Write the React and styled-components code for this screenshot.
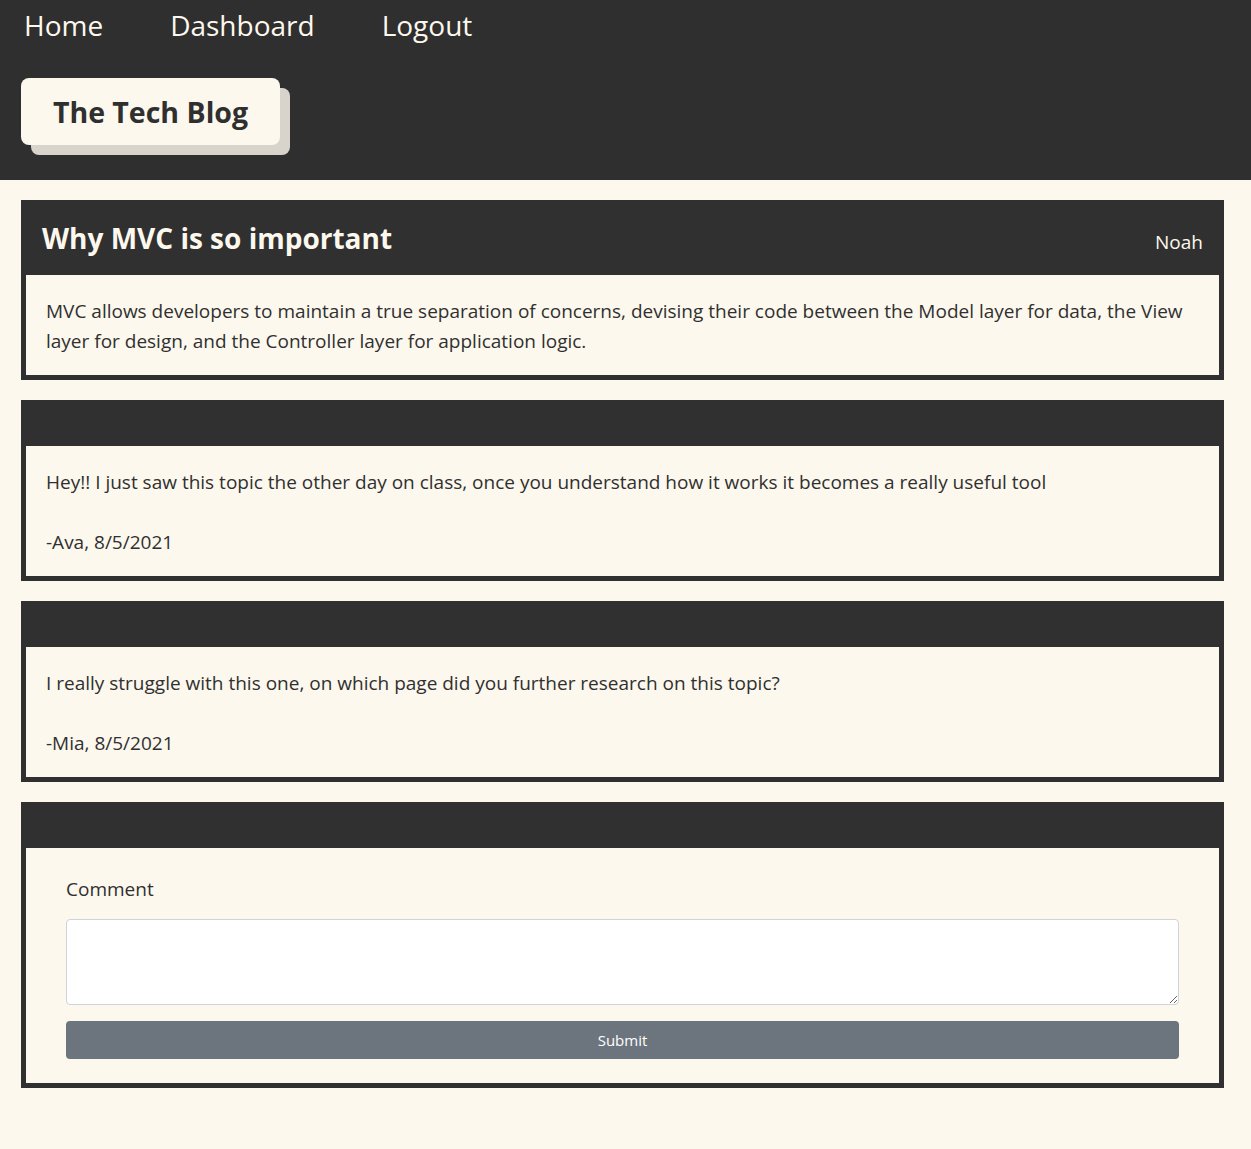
import React from "react";
import styled, { createGlobalStyle } from "styled-components";

const GlobalStyle = createGlobalStyle`
  body {
    margin: 0;
    padding: 0;
    background-color: #fdf8ee;
    font-family: 'Open Sans', 'Noto Sans', sans-serif;
    color: #303030;
  }
  * {
    box-sizing: border-box;
  }
`;

const Header = styled.header`
  background-color: #2f2f2f;
  height: 180px;
  padding: 5px 24px 0 21px;
`;

const Nav = styled.nav`
  display: flex;
  gap: 67px;
  padding-left: 3px;
`;

const NavLink = styled.a`
  color: #fdf8ee;
  font-size: 28px;
  line-height: 40px;
  text-decoration: none;
`;

const TitleWrap = styled.div`
  position: relative;
  display: inline-block;
  margin-top: 33px;
`;

const TitleShadow = styled.div`
  position: absolute;
  left: 10px;
  top: 10px;
  width: 100%;
  height: 100%;
  background-color: #d9d4cb;
  border-radius: 8px;
`;

const TitleBox = styled.h1`
  position: relative;
  margin: 0;
  width: 259px;
  height: 67px;
  display: flex;
  align-items: center;
  justify-content: center;
  background-color: #fdf8ee;
  border-radius: 8px;
  font-size: 28.5px;
  font-weight: 700;
  color: #2f2f2f;
`;

const Main = styled.main`
  display: flex;
  flex-direction: column;
  gap: 20px;
  padding: 20px 27px 40px 21px;
`;

const Card = styled.section`
  border: 5px solid #303030;
  background-color: #fdf8ee;
`;

const CardHeader = styled.div`
  background-color: #303030;
  color: #fdf8ee;
  display: flex;
  justify-content: space-between;
  align-items: center;
  height: ${(p) => (p.$tall ? "75px" : "46px")};
  margin: -5px -5px 0;
  padding: 0 21px;
`;

const PostTitle = styled.h2`
  margin: 0;
  font-size: 28px;
  font-weight: 700;
`;

const Author = styled.span`
  font-size: 19px;
  padding-top: 8px;
`;

const CardBody = styled.div`
  padding: 21px 20px 19px;
  font-size: 19px;
  line-height: 30px;
`;

const Para = styled.p`
  margin: 0;
`;

const Signature = styled.p`
  margin: 30px 0 0;
`;

const Form = styled.form`
  display: flex;
  flex-direction: column;
  padding: 26px 40px 24px;
`;

const Label = styled.label`
  font-size: 19px;
  line-height: 30px;
  margin-bottom: 15px;
`;

const TextArea = styled.textarea`
  height: 86px;
  border: 1px solid #ced4da;
  border-radius: 4px;
  background: #fff;
  font-family: inherit;
  font-size: 16px;
  padding: 6px 12px;
`;

const Button = styled.button`
  margin-top: 16px;
  height: 38px;
  border: none;
  border-radius: 4px;
  background-color: #6c757d;
  color: #fff;
  font-family: inherit;
  font-size: 15px;
`;

const comments = [
  {
    text: "Hey!! I just saw this topic the other day on class, once you understand how it works it becomes a really useful tool",
    by: "-Ava, 8/5/2021",
  },
  {
    text: "I really struggle with this one, on which page did you further research on this topic?",
    by: "-Mia, 8/5/2021",
  },
];

export default function App() {
  return (
    <>
      <GlobalStyle />
      <Header>
        <Nav>
          <NavLink href="#">Home</NavLink>
          <NavLink href="#">Dashboard</NavLink>
          <NavLink href="#">Logout</NavLink>
        </Nav>
        <TitleWrap>
          <TitleShadow />
          <TitleBox>The Tech Blog</TitleBox>
        </TitleWrap>
      </Header>
      <Main>
        <Card>
          <CardHeader $tall>
            <PostTitle>Why MVC is so important</PostTitle>
            <Author>Noah</Author>
          </CardHeader>
          <CardBody>
            <Para>
              MVC allows developers to maintain a true separation of concerns, devising their code between the Model layer for data, the View layer for design, and the Controller layer for application logic.
            </Para>
          </CardBody>
        </Card>
        {comments.map((c) => (
          <Card key={c.by}>
            <CardHeader />
            <CardBody>
              <Para>{c.text}</Para>
              <Signature>{c.by}</Signature>
            </CardBody>
          </Card>
        ))}
        <Card>
          <CardHeader />
          <Form onSubmit={(e) => e.preventDefault()}>
            <Label htmlFor="comment">Comment</Label>
            <TextArea id="comment" />
            <Button type="submit">Submit</Button>
          </Form>
        </Card>
      </Main>
    </>
  );
}
